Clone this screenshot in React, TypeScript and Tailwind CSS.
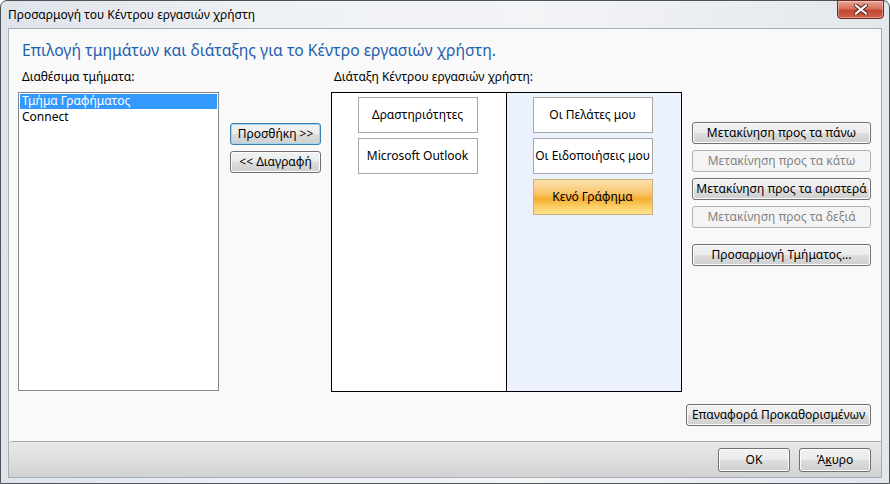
import React from 'react';

const font = "font-['Noto_Sans','Open_Sans',sans-serif]";

type BtnProps = {
    label: string;
    w: string;
    disabled?: boolean;
    focused?: boolean;
    h?: string;
};

const WinButton: React.FC<BtnProps> = ({ label, w, disabled, focused, h = 'h-[22px]' }) => {
    if (disabled) {
        return (
            <div className={`${w} ${h} flex items-center justify-center rounded-[3px] border border-[#adb2b5] bg-[#f4f4f4] text-[12px] text-[#838383]`}>
                {label}
            </div>
        );
    }
    return (
        <div
            className={`${w} ${h} flex items-center justify-center rounded-[3px] border ${
                focused ? 'border-[#3c7fb1] shadow-[inset_0_0_0_1px_#9fd5f5]' : 'border-[#707070] shadow-[inset_0_0_0_1px_#fcfcfc]'
            } bg-[linear-gradient(#f2f2f2_0%,#ebebeb_50%,#dddddd_51%,#cfcfcf_100%)] text-[12px] text-black`}
        >
            {label}
        </div>
    );
};

const Tile: React.FC<{ label: string; active?: boolean }> = ({ label, active }) => (
    <div
        className={`w-[120px] h-[36px] flex items-center justify-center border text-[12px] text-black ${
            active
                ? 'border-[#c9b27a] bg-[linear-gradient(#fde2b0_0%,#f9c46a_40%,#f6ad2f_55%,#fbd16a_80%,#fde28c_100%)]'
                : 'border-[#a6a6a6] bg-white'
        }`}
    >
        {label}
    </div>
);

export default function App() {
    return (
        <div className={`w-[890px] h-[484px] overflow-hidden ${font}`}>
            <div className="w-full h-full flex flex-col rounded-t-[7px] border border-[#4d5359] bg-[linear-gradient(90deg,#dfe4ea_0%,#eef1f5_30%,#f3f4f6_60%,#e3e7ec_100%)]">
                {/* title bar */}
                <div className="h-[27px] flex items-start shrink-0">
                    <div className="pl-[7px] pt-[6px] text-[12px] text-black leading-[15px]">
                        Προσαρμογή του Κέντρου εργασιών χρήστη
                    </div>
                    <div className="ml-auto mr-[5px] w-[47px] h-[19px] -mt-px flex items-center justify-center rounded-b-[4px] border border-[#6b2a22] bg-[linear-gradient(#e8a597_0%,#d6705f_45%,#c24632_55%,#d1604a_100%)] shadow-[inset_0_0_0_1px_rgba(255,255,255,0.35)]">
                        <svg width="14" height="11" viewBox="0 0 14 11">
                            <path d="M2 1.5 L12 9.5 M12 1.5 L2 9.5" stroke="#4a1a12" strokeWidth="4" strokeLinecap="square" />
                            <path d="M2 1.5 L12 9.5 M12 1.5 L2 9.5" stroke="#ffffff" strokeWidth="2.2" strokeLinecap="square" />
                        </svg>
                    </div>
                </div>

                {/* client area */}
                <div className="mx-[7px] flex-1 flex flex-col border border-[#a3adb8] bg-[#f9f9f9]">
                    <div className="flex-1 flex flex-col pt-[10px] pl-[9px] pr-[10px]">
                        <div className="pl-[4px] h-[22px] text-[15.7px] leading-[22px] text-[#1e5fae]">
                            Επιλογή τμημάτων και διάταξης για το Κέντρο εργασιών χρήστη.
                        </div>

                        <div className="flex mt-[8px]">
                            {/* available list */}
                            <div className="w-[201px] flex flex-col">
                                <div className="pl-[4px] h-[16px] text-[12px] leading-[16px] text-black">Διαθέσιμα τμήματα:</div>
                                <div className="mt-[7px] h-[299px] border border-[#828790] bg-white p-px">
                                    <div className="h-[15px] pl-[2px] bg-[#3399ff] text-white text-[12px] leading-[14px]">Τμήμα Γραφήματος</div>
                                    <div className="h-[15px] pl-[2px] text-black text-[12px] leading-[15px]">Connect</div>
                                </div>
                            </div>

                            {/* add / remove */}
                            <div className="ml-[11px] w-[91px] mt-[54px] flex flex-col gap-[6px]">
                                <WinButton label="Προσθήκη >>" w="w-[91px]" focused />
                                <WinButton label="<< Διαγραφή" w="w-[91px]" />
                            </div>

                            {/* layout */}
                            <div className="ml-[10px] w-[351px] flex flex-col">
                                <div className="pl-[3px] h-[16px] text-[12px] leading-[16px] text-black">Διάταξη Κέντρου εργασιών χρήστη:</div>
                                <div className="mt-[7px] h-[300px] flex border border-black">
                                    <div className="w-[175px] border-r border-black bg-white flex flex-col items-center gap-[5px] pt-[4px] pr-[3px]">
                                        <Tile label="Δραστηριότητες" />
                                        <Tile label="Microsoft Outlook" />
                                    </div>
                                    <div className="flex-1 bg-[#ebf2fe] flex flex-col items-center gap-[5px] pt-[4px] pr-[3px]">
                                        <Tile label="Οι Πελάτες μου" />
                                        <Tile label="Οι Ειδοποιήσεις μου" />
                                        <Tile label="Κενό Γράφημα" active />
                                    </div>
                                </div>
                            </div>

                            {/* move buttons */}
                            <div className="ml-[10px] w-[179px] mt-[53px] flex flex-col gap-[6px]">
                                <WinButton label="Μετακίνηση προς τα πάνω" w="w-[179px]" />
                                <WinButton label="Μετακίνηση προς τα κάτω" w="w-[179px]" disabled />
                                <WinButton label="Μετακίνηση προς τα αριστερά" w="w-[179px]" />
                                <WinButton label="Μετακίνηση προς τα δεξιά" w="w-[179px]" disabled />
                                <div className="mt-[10px]">
                                    <WinButton label="Προσαρμογή Τμήματος..." w="w-[179px]" />
                                </div>
                            </div>
                        </div>

                        <div className="flex justify-end mt-[12px]">
                            <WinButton label="Επαναφορά Προκαθορισμένων" w="w-[185px]" />
                        </div>
                    </div>

                    {/* bottom bar */}
                    <div className="h-[36px] shrink-0 flex items-center justify-end gap-[9px] pr-[10px] border-t border-[#a9a9a9] rounded-tl-[4px] bg-[linear-gradient(#e8e8e8_0%,#dedede_50%,#d2d2d2_100%)]">
                        <WinButton label="OK" w="w-[72px]" h="h-[24px]" />
                        <div className="w-[72px] h-[24px] flex items-center justify-center rounded-[3px] border border-[#707070] shadow-[inset_0_0_0_1px_#fcfcfc] bg-[linear-gradient(#f2f2f2_0%,#ebebeb_50%,#dddddd_51%,#cfcfcf_100%)] text-[12px] text-black">
                            <span>Ά<span className="underline">κ</span>υρο</span>
                        </div>
                    </div>
                </div>
                <div className="h-[5px] shrink-0" />
            </div>
        </div>
    );
}
